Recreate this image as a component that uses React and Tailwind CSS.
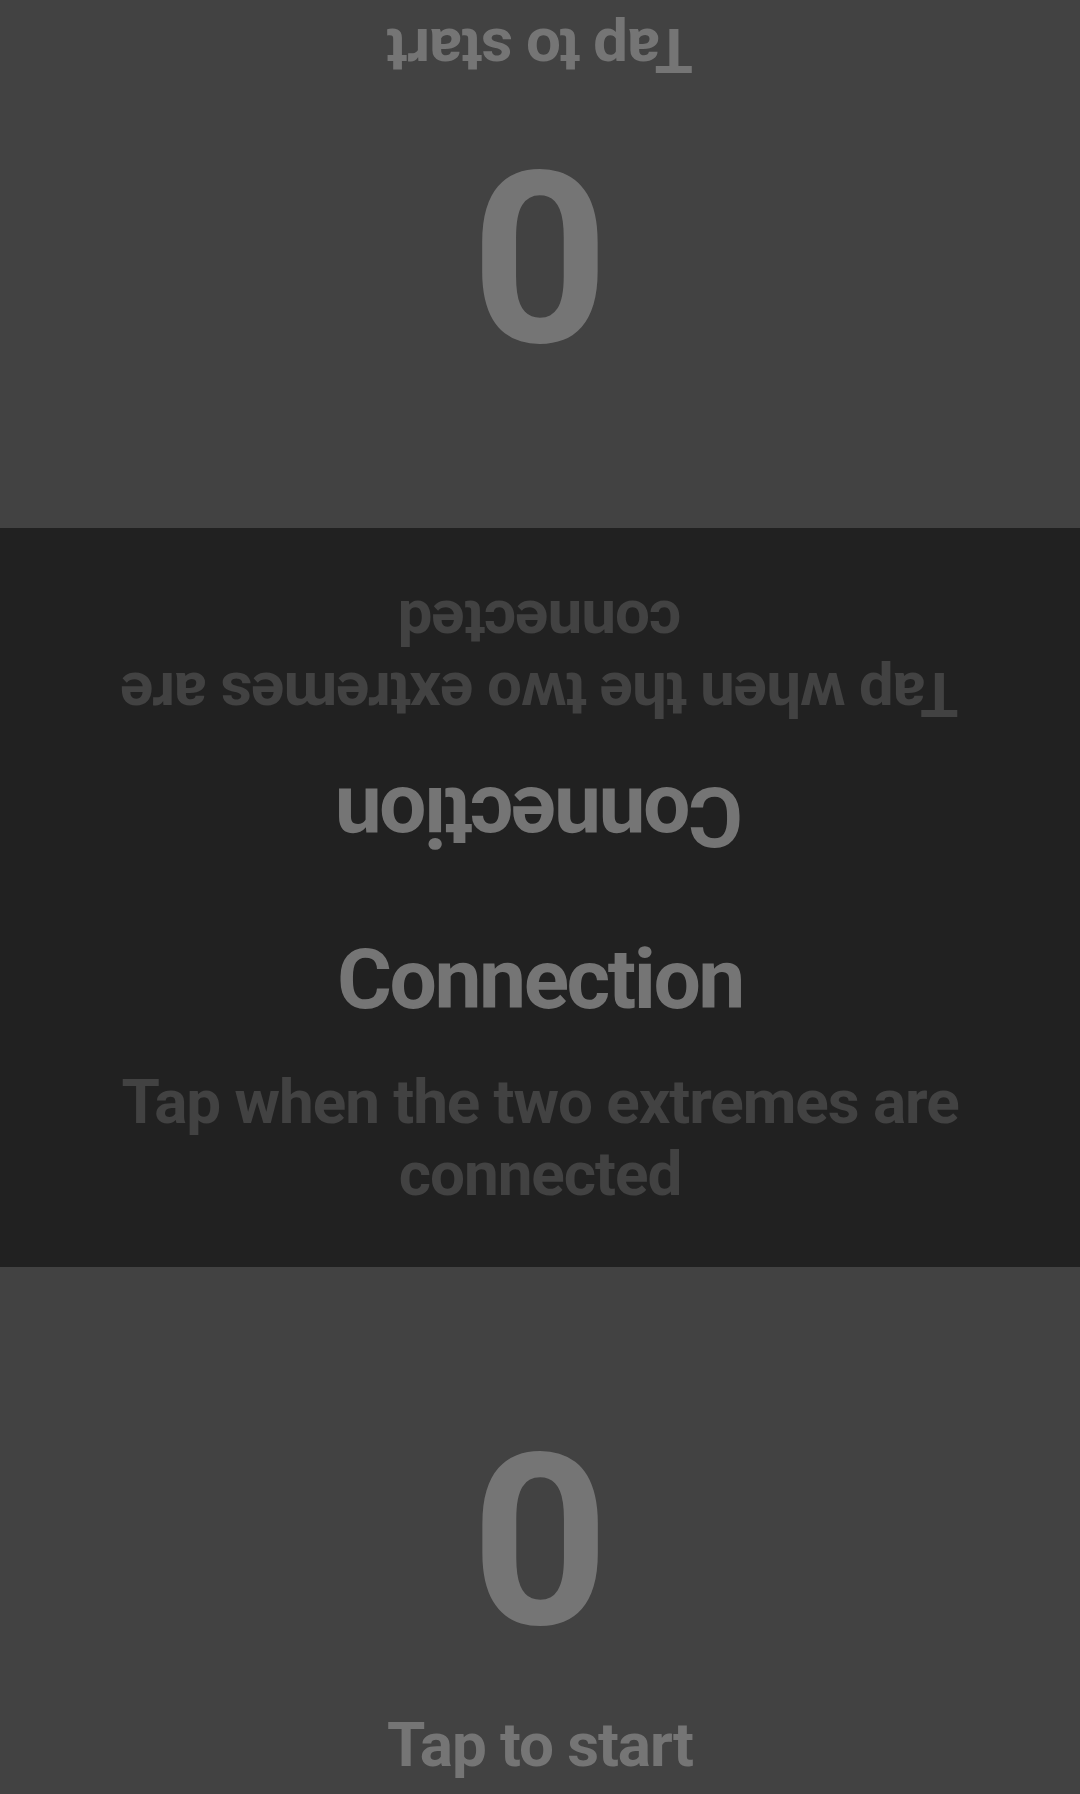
import React from "react";

function PlayerPanel({ flipped }) {
  return (
    <div
      className={`h-[527px] w-full bg-[#424242] flex flex-col items-center pt-[155px] ${flipped ? "rotate-180" : ""}`}
    >
      <div className="text-[240px] leading-[240px] h-[240px] font-bold text-[#757575]">0</div>
      <div className="mt-[47px] text-[62px] leading-[72px] font-bold text-[#757575] tracking-[-1.1px]">Tap to start</div>
    </div>
  );
}

function InfoHalf({ flipped }) {
  return (
    <div
      className={`flex-1 w-full flex flex-col items-center pt-[40px] px-4 ${flipped ? "rotate-180" : ""}`}
    >
      <div className="text-[84px] leading-[84px] font-bold text-[#757575] tracking-[-2.5px]">Connection</div>
      <div className="mt-[44px] text-[62px] leading-[72px] font-bold text-[#424242] text-center tracking-[-1.05px]">
        Tap when the two extremes are connected
      </div>
    </div>
  );
}

export default function App() {
  return (
    <div
      className="w-[1080px] h-[1794px] flex flex-col overflow-hidden select-none"
      style={{ fontFamily: "Roboto, 'Noto Sans', Arial, sans-serif" }}
    >
      <div className="h-[528px] w-full bg-[#424242] flex items-end">
        <PlayerPanel flipped />
      </div>
      <div className="h-[739px] w-full bg-[#212121] flex flex-col">
        <InfoHalf flipped />
        <InfoHalf />
      </div>
      <PlayerPanel />
    </div>
  );
}
